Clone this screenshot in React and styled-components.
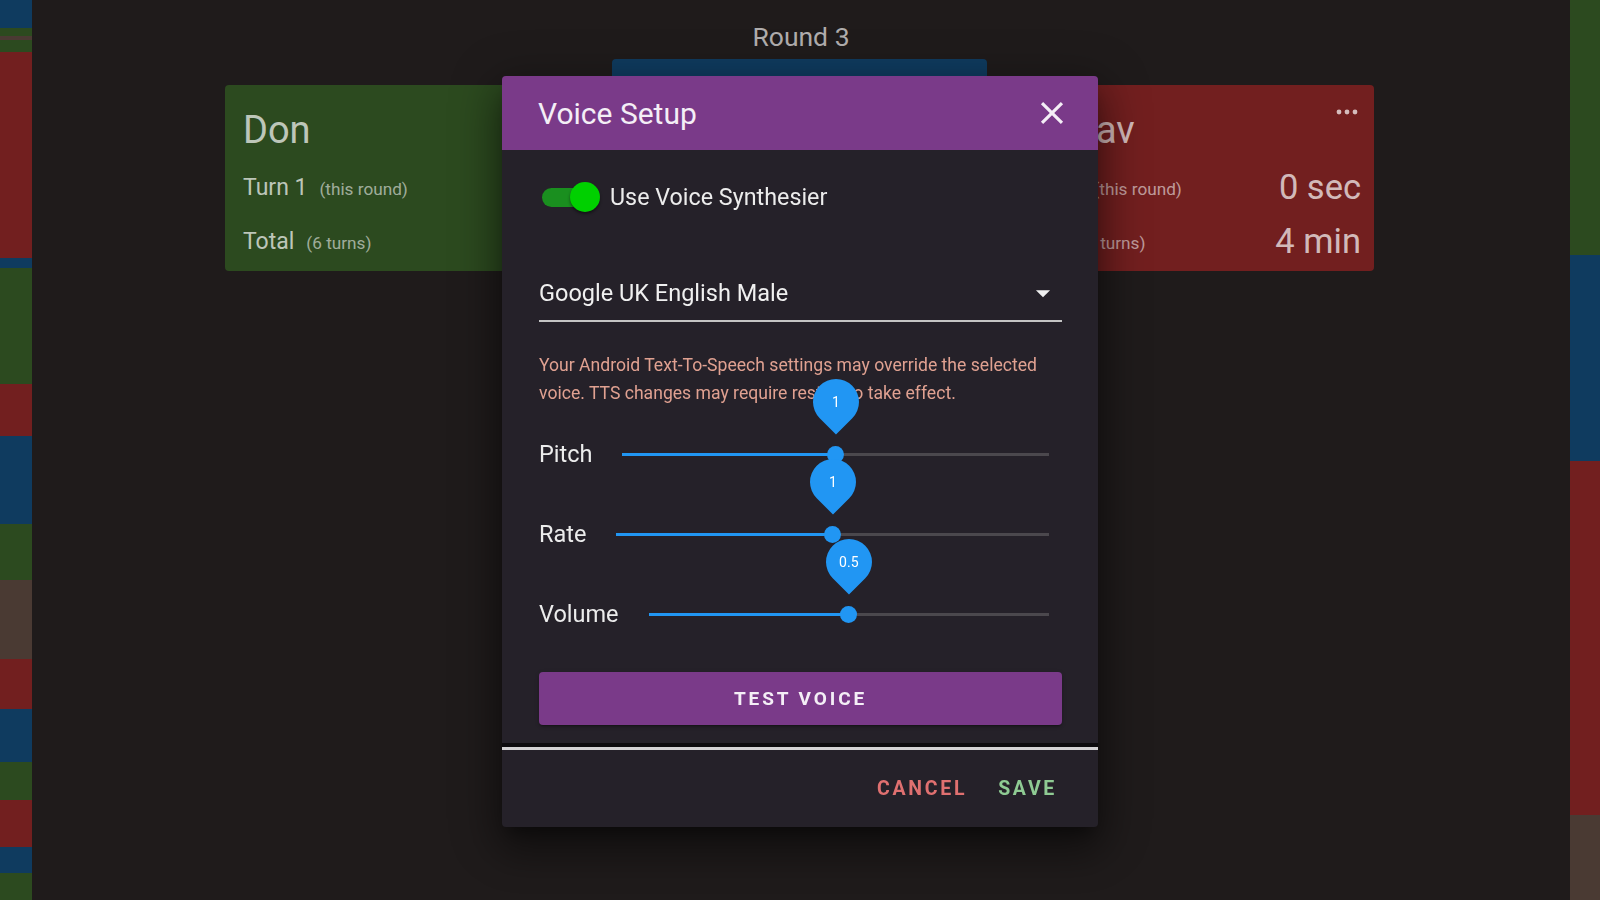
import React from 'react';
import styled, { createGlobalStyle } from 'styled-components';

const GlobalStyle = createGlobalStyle`
  html, body {
    margin: 0;
    padding: 0;
  }
  body {
    background: #1f1b1b;
    font-family: Roboto, 'Noto Sans', 'Liberation Sans', sans-serif;
    color: #fff;
  }
`;

const palette = {
  green: '#2c4a1f',
  red: '#721f1f',
  blue: '#0f3b5f',
  brown: '#4a3a33',
};

const leftStrip = [
  ['blue', 28], ['green', 8], ['brown', 4], ['green', 12], ['red', 206],
  ['blue', 10], ['green', 116], ['red', 52], ['blue', 88], ['green', 56],
  ['brown', 79], ['red', 50], ['blue', 53], ['green', 38], ['red', 47],
  ['blue', 26], ['green', 27],
];

const rightStrip = [['green', 255], ['blue', 206], ['red', 354], ['brown', 85]];

const players = [
  { name: 'Don', color: 'green', turn: 'Turn 1', round: '0 sec', turns: 6, total: '3 min' },
  { name: 'Sam', color: 'blue', turn: 'Turn 1', round: '12 sec', turns: 6, total: '5 min', active: true },
  { name: 'Gustav', color: 'red', turn: 'Turn 1', round: '0 sec', turns: 6, total: '4 min' },
];

const sliders = [
  { label: 'Pitch', value: 1, max: 2 },
  { label: 'Rate', value: 1, max: 2 },
  { label: 'Volume', value: 0.5, max: 1 },
];

const Page = styled.div`
  display: flex;
  width: 100vw;
  height: 900px;
  overflow: hidden;
`;

const Strip = styled.div`
  width: ${(p) => p.width}px;
  flex-shrink: 0;
  display: flex;
  flex-direction: column;
`;

const Segment = styled.div`
  height: ${(p) => p.h}px;
  background: ${(p) => palette[p.color]};
`;

const Main = styled.div`
  flex: 1;
  display: flex;
  flex-direction: column;
  align-items: center;
  padding-top: 21px;
`;

const RoundTitle = styled.div`
  font-size: 26.5px;
  line-height: 32px;
  color: #b0adad;
`;

const CardRow = styled.div`
  display: flex;
  align-items: flex-start;
  gap: 12px;
  margin-top: 6px;
  margin-right: 3px;
`;

const Card = styled.div`
  width: 375px;
  box-sizing: border-box;
  margin-top: ${(p) => (p.active ? 0 : 26)}px;
  padding: ${(p) => (p.active ? 40 : 14)}px 13px 3px 18px;
  background: ${(p) => palette[p.color]};
  border-radius: 4px;
  color: rgba(255, 255, 255, 0.7);
`;

const CardHead = styled.div`
  display: flex;
  justify-content: space-between;
  align-items: flex-start;
  height: 61px;
`;

const Name = styled.div`
  font-size: 38px;
  line-height: 62px;
`;

const MoreIcon = styled.svg`
  width: 24px;
  height: 24px;
  margin: 1px 2px 0 0;
  fill: rgba(255, 255, 255, 0.7);
`;

const StatRow = styled.div`
  display: flex;
  align-items: center;
  justify-content: space-between;
  height: 54px;
`;

const StatLabel = styled.span`
  display: flex;
  align-items: baseline;
  font-size: 23px;
`;

const StatNote = styled.span`
  font-size: 17.2px;
  margin-left: 12px;
  opacity: 0.8;
`;

const StatValue = styled.span`
  font-size: 34.5px;
`;

const Dialog = styled.div`
  position: fixed;
  top: 76px;
  left: 50%;
  transform: translateX(-50%);
  width: 596px;
  background: #252129;
  border-radius: 4px;
  box-shadow: 0 11px 15px -7px rgba(0, 0, 0, 0.4), 0 24px 38px 3px rgba(0, 0, 0, 0.3),
    0 9px 46px 8px rgba(0, 0, 0, 0.25);
`;

const Header = styled.div`
  height: 74px;
  display: flex;
  align-items: center;
  justify-content: space-between;
  padding: 0 27px 0 36px;
  background: #7a3a89;
  border-radius: 4px 4px 0 0;
`;

const Title = styled.div`
  font-size: 30px;
  color: #f4eef6;
`;

const CloseIcon = styled.svg`
  width: 38px;
  height: 38px;
  fill: #f4eef6;
`;

const Body = styled.div`
  padding: 0 36px 18px 37px;
`;

const ToggleRow = styled.div`
  display: flex;
  align-items: center;
  height: 40px;
  margin-top: 27px;
  padding-left: 3px;
`;

const Switch = styled.span`
  position: relative;
  width: 58px;
  height: 30px;
  display: inline-flex;
  align-items: center;
`;

const SwitchTrack = styled.span`
  width: 48px;
  height: 19px;
  border-radius: 10px;
  background: #1a8f1f;
`;

const SwitchKnob = styled.span`
  position: absolute;
  right: 0;
  top: 0;
  width: 30px;
  height: 30px;
  border-radius: 50%;
  background: #00d000;
  box-shadow: 0 2px 3px rgba(0, 0, 0, 0.45);
`;

const ToggleLabel = styled.span`
  margin-left: 10px;
  font-size: 23.3px;
  color: #ececec;
`;

const Select = styled.div`
  margin-top: 60px;
  height: 32px;
  padding-bottom: 11px;
  display: flex;
  align-items: center;
  justify-content: space-between;
  border-bottom: 2px solid #c4c4c4;
  font-size: 23.5px;
  color: #f0f0f0;
`;

const ArrowIcon = styled.svg`
  width: 34px;
  height: 34px;
  margin-right: 2px;
  fill: #f0f0f0;
`;

const Warning = styled.p`
  margin: 29px 0 0;
  font-size: 17.6px;
  line-height: 28px;
  color: #e0a191;
`;

const SliderList = styled.div`
  display: flex;
  flex-direction: column;
  gap: 40px;
  margin-top: 27px;
`;

const SliderRow = styled.div`
  display: flex;
  align-items: center;
  height: 40px;
`;

const SliderLabel = styled.span`
  font-size: 23.5px;
  color: #ececec;
  margin-right: 30px;
`;

const Slider = styled.div`
  position: relative;
  flex: 1;
  height: 16px;
  margin-right: 13px;
`;

const Rail = styled.span`
  position: absolute;
  left: 0;
  right: 0;
  top: 7px;
  height: 3px;
  background: #4b484d;
`;

const Fill = styled.span`
  position: absolute;
  left: 0;
  top: 7px;
  height: 3px;
  background: #2196f3;
`;

const Thumb = styled.span`
  position: absolute;
  top: 0;
  width: 17px;
  height: 17px;
  margin: -0.5px 0 0 -8.5px;
  border-radius: 50%;
  background: #2196f3;
`;

const ValueLabel = styled.span`
  position: absolute;
  top: -67px;
  width: 46px;
  height: 46px;
  margin-left: -23px;
  display: flex;
  align-items: center;
  justify-content: center;
  border-radius: 50% 50% 50% 0;
  background: #2196f3;
  transform: rotate(-45deg);
  z-index: 2;
`;

const ValueText = styled.span`
  transform: rotate(45deg);
  font-size: 14px;
  color: #fff;
`;

const TestButton = styled.button`
  display: block;
  width: 100%;
  height: 53px;
  margin-top: 38px;
  border: none;
  border-radius: 4px;
  background: #7a3a89;
  color: #f4eef6;
  font-family: inherit;
  font-size: 19px;
  font-weight: 700;
  letter-spacing: 2.9px;
  box-shadow: 0 3px 1px -2px rgba(0, 0, 0, 0.2), 0 2px 2px 0 rgba(0, 0, 0, 0.14),
    0 1px 5px 0 rgba(0, 0, 0, 0.12);
`;

const Divider = styled.div`
  height: 4px;
  background: #0d0b0e;
  border-bottom: 3px solid #d4d2d4;
`;

const Footer = styled.div`
  height: 77px;
  display: flex;
  align-items: center;
  justify-content: flex-end;
  gap: 31px;
  padding-right: 41px;
`;

const FooterButton = styled.button`
  padding: 0;
  border: none;
  background: none;
  color: ${(p) => p.color};
  font-family: inherit;
  font-size: 19.5px;
  font-weight: 700;
  letter-spacing: 2.7px;
`;

const PlayerCard = ({ player }) => (
  <Card color={player.color} active={player.active}>
    <CardHead>
      <Name>{player.name}</Name>
      <MoreIcon viewBox="0 0 24 24">
        <circle cx="4" cy="12" r="2.4" />
        <circle cx="12" cy="12" r="2.4" />
        <circle cx="20" cy="12" r="2.4" />
      </MoreIcon>
    </CardHead>
    <StatRow>
      <StatLabel>
        {player.turn}
        <StatNote>(this round)</StatNote>
      </StatLabel>
      <StatValue>{player.round}</StatValue>
    </StatRow>
    <StatRow>
      <StatLabel>
        Total
        <StatNote>({player.turns} turns)</StatNote>
      </StatLabel>
      <StatValue>{player.total}</StatValue>
    </StatRow>
  </Card>
);

const VoiceSlider = ({ label, value, max }) => {
  const pct = `${(value / max) * 100}%`;
  return (
    <SliderRow>
      <SliderLabel>{label}</SliderLabel>
      <Slider>
        <Rail />
        <Fill style={{ width: pct }} />
        <Thumb style={{ left: pct }} />
        <ValueLabel style={{ left: pct }}>
          <ValueText>{value}</ValueText>
        </ValueLabel>
      </Slider>
    </SliderRow>
  );
};

const App = () => (
  <>
    <GlobalStyle />
    <Page>
      <Strip width={32}>
        {leftStrip.map(([c, h], i) => (
          <Segment key={i} color={c} h={h} />
        ))}
      </Strip>
      <Main>
        <RoundTitle>Round 3</RoundTitle>
        <CardRow>
          {players.map((p) => (
            <PlayerCard key={p.name} player={p} />
          ))}
        </CardRow>
      </Main>
      <Strip width={30}>
        {rightStrip.map(([c, h], i) => (
          <Segment key={i} color={c} h={h} />
        ))}
      </Strip>
    </Page>

    <Dialog>
      <Header>
        <Title>Voice Setup</Title>
        <CloseIcon viewBox="0 0 24 24">
          <path d="M19 6.41L17.59 5 12 10.59 6.41 5 5 6.41 10.59 12 5 17.59 6.41 19 12 13.41 17.59 19 19 17.59 13.41 12z" />
        </CloseIcon>
      </Header>
      <Body>
        <ToggleRow>
          <Switch>
            <SwitchTrack />
            <SwitchKnob />
          </Switch>
          <ToggleLabel>Use Voice Synthesier</ToggleLabel>
        </ToggleRow>
        <Select>
          <span>Google UK English Male</span>
          <ArrowIcon viewBox="0 0 24 24">
            <path d="M7 10l5 5 5-5z" />
          </ArrowIcon>
        </Select>
        <Warning>
          Your Android Text-To-Speech settings may override the selected voice. TTS changes
          may require restart to take effect.
        </Warning>
        <SliderList>
          {sliders.map((s) => (
            <VoiceSlider key={s.label} {...s} />
          ))}
        </SliderList>
        <TestButton>TEST VOICE</TestButton>
      </Body>
      <Divider />
      <Footer>
        <FooterButton color="#e07070">CANCEL</FooterButton>
        <FooterButton color="#8fcb93">SAVE</FooterButton>
      </Footer>
    </Dialog>
  </>
);

export default App;
